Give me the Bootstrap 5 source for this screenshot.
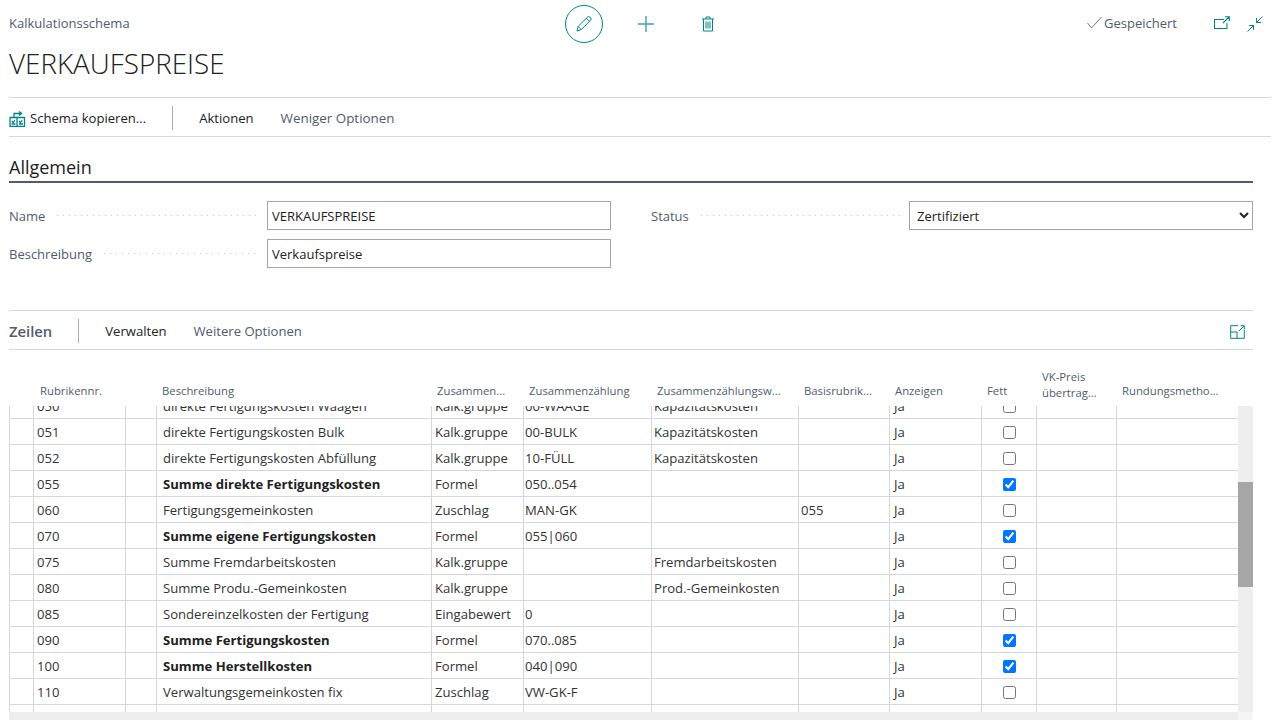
<!DOCTYPE html>
<html lang="de"><head><meta charset="utf-8"><title>Verkaufspreise</title>
<link href="https://cdn.jsdelivr.net/npm/bootstrap@5.3.0/dist/css/bootstrap.min.css" rel="stylesheet">
<style>
html,body{height:720px;overflow:hidden;background:#fff}
body{font-family:"Open Sans","Noto Sans",sans-serif;font-size:13px;color:#212121;line-height:1.3}
svg{display:block;fill:none;stroke:#008489}
.page{padding-left:9px;width:1271px}
.inner{width:1244px}
.top{display:grid;grid-template-columns:1fr auto 1fr;height:46px;align-items:center;padding-top:2px}
.muted{color:#505c6d}
.lift{margin-bottom:2px}
.mid{display:flex;align-items:center}
.pencil{width:38px;height:38px;border:1px solid #008489;border-radius:50%;display:flex;align-items:center;justify-content:center}
.plus{margin-left:34px}
.trash{margin-left:46px}
.chk{stroke:#6c7685;margin-right:2px}
.open{margin-left:37px}
.cl{margin-left:17px;margin-right:8px}
.title{font-size:27.8px;font-weight:300;color:#212121;line-height:34px;height:51px}
.bar{display:flex;align-items:center;height:40px;padding-top:3px;border-top:1px solid #d5d5dc;border-bottom:1px solid #d5d5dc;font-size:13.1px}
.sep{width:1px;height:24px;background:#a6adb8;margin-left:26px;margin-right:26px;margin-top:-2px}
.gap-m{margin-left:27px}
.wide{font-size:13.4px}
.sec{font-size:18px;font-weight:500;color:#212121;height:46px;padding-top:18px;line-height:24px;border-bottom:2px solid #505c6d}
.row.f{--bs-gutter-x:40px;margin-top:18px;height:109px}
.fld{display:flex;height:29px;margin-bottom:9px;align-items:center}
.lbl{width:258px;display:flex;align-items:center;gap:12px;color:#505c6d;padding-top:1px}
.dots{flex:1;height:2px;margin-right:8px;background-image:linear-gradient(90deg,#c4c8cf 1px,transparent 1px);background-size:6px 1px;background-repeat:repeat-x}
.form-control.bc,.form-select.bc{height:29px;border:1px solid #a6a6a6;border-radius:0;padding:1px 4px 0;font-size:13px;color:#212121;min-height:0;flex:1;width:auto;box-shadow:none}
.form-select.bc{padding-left:3px;appearance:auto;background-image:none}
.zeilen{font-size:14.8px;font-weight:600;color:#505c6d}
.grid{table-layout:fixed;width:1229px;margin:0;border-collapse:collapse}
.head{height:56px}
.head th{border:0;font-weight:400;color:#505c6d;font-size:11.3px;line-height:16px;padding:0 0 7px 6px;vertical-align:bottom;background:transparent;box-shadow:none;white-space:nowrap}
.head th:nth-child(2){padding-left:7px}
.head th:nth-child(11){padding-bottom:5px}
.body{display:flex;height:306px;width:1244px}
.clip{width:1229px;overflow:hidden;height:306px}
.clip table{margin-top:-14px}
.clip td{height:26px;padding:0 0 0 4px;border:1px solid #d5d5dc;vertical-align:middle;line-height:24px;white-space:nowrap;color:#333;font-size:13.1px;background:transparent;box-shadow:none;overflow:hidden}
.clip td:nth-child(2){padding-left:3px}
.clip td:nth-child(4){padding-left:6px}
.clip td:nth-child(5){padding-left:3px}
.clip td:nth-child(6){padding-left:1px}
.clip td:nth-child(7),.clip td:nth-child(8){padding-left:2px}
.clip td.c{padding:0;text-align:center}
.clip td.c input{display:block;margin:1px auto 0;width:13px;height:13px}
.clip tr.b td:nth-child(4){font-weight:700;color:#212121}
.vs{width:15px;background:#eee;height:306px}
.vs div{margin-top:76px;height:105px;background:#a6a6a6}
.hs{display:flex;height:8px;width:1244px}
.hs div{width:1229px;background:#eee}
.hs span{width:15px;background:#f5f5f5}
</style></head><body>
<div class="page">
 <div class="top">
  <div class="muted lift">Kalkulationsschema</div>
  <div class="mid">
   <div class="pencil"><svg width="18" height="18" viewBox="0 0 18 18"><path d="M2 16l1.200-4.600L12.600 2a1.600 1.600 0 0 1 2.200 0l.9.9a1.600 1.600 0 0 1 0 2.200L6.300 14.600zM3.200 11.400l3.100 3.200M11.400 3.200l3.200 3.200"/></svg></div>
   <div class="plus"><svg width="18" height="18" viewBox="0 0 18 18"><path d="M9 1v16M1 9h16" stroke-width="1.400" opacity=".75"/></svg></div>
   <div class="trash"><svg width="14" height="16" viewBox="0 0 14 16"><path d="M1 3h12M5 3V1h4v2M2.500 3v12h9V3M5 5.500v7M7 5.500v7M9 5.500v7"/></svg></div>
  </div>
  <div class="d-flex justify-content-end align-items-center muted">
   <svg width="15" height="13" viewBox="0 0 15 13" class="chk lift"><path d="M.5 7l4 5L14.500 1"/></svg>
   <span class="lift">Gespeichert</span>
   <svg width="16" height="13" viewBox="0 0 16 13" class="open lift"><path d="M10 3.500H.5v9H13V7M9 7l6-6M11 .7h4.300V5" stroke-width="1.100"/></svg>
   <svg width="16" height="16" viewBox="0 0 16 16" class="cl"><path d="M15.500.5L9.500 6.500M9.500 2v4.500H14M.5 15.500l6-6M2 9.500h4.500V14"/></svg>
  </div>
 </div>
 <div class="title">VERKAUFSPREISE</div>
 <div class="bar">
  <svg width="17" height="16" viewBox="0 0 17 16" class="me-1"><path d="M1 6.500h7v9H1zM8 6.500h7.500v9H8zM2.800 10l1.400 1.500 1.800-2.200M10 10l1.400 1.500 1.800-2.200M2.500 13h4M10 13h4M5 6V2.500h7M10 .5l2.500 2-2.500 2" stroke-width="1.300"/></svg>
  <span>Schema kopieren...</span><span class="sep"></span>
  <span>Aktionen</span><span class="muted gap-m wide">Weniger Optionen</span>
 </div>
 <div class="inner">
  <div class="sec">Allgemein</div>
  <div class="row f">
   <div class="col-6">
    <div class="fld"><div class="lbl"><span>Name</span><span class="dots"></span></div><input class="form-control bc" value="VERKAUFSPREISE"></div>
    <div class="fld"><div class="lbl"><span>Beschreibung</span><span class="dots"></span></div><input class="form-control bc" value="Verkaufspreise"></div>
   </div>
   <div class="col-6">
    <div class="fld"><div class="lbl"><span>Status</span><span class="dots"></span></div><select class="form-select bc"><option>Zertifiziert</option></select></div>
   </div>
  </div>
  <div class="bar">
   <span class="zeilen">Zeilen</span><span class="sep"></span>
   <span>Verwalten</span><span class="muted gap-m">Weitere Optionen</span>
   <svg class="ms-auto me-2" width="15" height="14" viewBox="0 0 15 14"><path d="M8 .7H.7v12.600h13.600V5M.7 7H7v6.300M9 6l5-5M10.500.7h3.800v3.800"/></svg>
  </div>
  <table class="table grid head"><colgroup><col style="width:24px"><col style="width:92px"><col style="width:31px"><col style="width:275px"><col style="width:92px"><col style="width:128px"><col style="width:147px"><col style="width:91px"><col style="width:92px"><col style="width:55px"><col style="width:80px"><col style="width:122px"></colgroup>
   <thead><tr><th></th><th>Rubrikennr.</th><th></th><th>Beschreibung</th><th>Zusammen...</th><th>Zusammenzählung</th><th>Zusammenzählungsw...</th><th>Basisrubrik...</th><th>Anzeigen</th><th>Fett</th><th>VK-Preis<br>übertrag...</th><th>Rundungsmetho...</th></tr></thead></table>
  <div class="body">
   <div class="clip"><table class="table grid"><colgroup><col style="width:24px"><col style="width:92px"><col style="width:31px"><col style="width:275px"><col style="width:92px"><col style="width:128px"><col style="width:147px"><col style="width:91px"><col style="width:92px"><col style="width:55px"><col style="width:80px"><col style="width:122px"></colgroup>
   <tbody>
   <tr><td></td><td>050</td><td></td><td>direkte Fertigungskosten Waagen</td><td>Kalk.gruppe</td><td>00-WAAGE</td><td>Kapazitätskosten</td><td></td><td>Ja</td><td class="c"><input type="checkbox"></td><td></td><td></td></tr>
   <tr><td></td><td>051</td><td></td><td>direkte Fertigungskosten Bulk</td><td>Kalk.gruppe</td><td>00-BULK</td><td>Kapazitätskosten</td><td></td><td>Ja</td><td class="c"><input type="checkbox"></td><td></td><td></td></tr>
   <tr><td></td><td>052</td><td></td><td>direkte Fertigungskosten Abfüllung</td><td>Kalk.gruppe</td><td>10-FÜLL</td><td>Kapazitätskosten</td><td></td><td>Ja</td><td class="c"><input type="checkbox"></td><td></td><td></td></tr>
   <tr class="b"><td></td><td>055</td><td></td><td>Summe direkte Fertigungskosten</td><td>Formel</td><td>050..054</td><td></td><td></td><td>Ja</td><td class="c"><input type="checkbox" checked></td><td></td><td></td></tr>
   <tr><td></td><td>060</td><td></td><td>Fertigungsgemeinkosten</td><td>Zuschlag</td><td>MAN-GK</td><td></td><td>055</td><td>Ja</td><td class="c"><input type="checkbox"></td><td></td><td></td></tr>
   <tr class="b"><td></td><td>070</td><td></td><td>Summe eigene Fertigungskosten</td><td>Formel</td><td>055|060</td><td></td><td></td><td>Ja</td><td class="c"><input type="checkbox" checked></td><td></td><td></td></tr>
   <tr><td></td><td>075</td><td></td><td>Summe Fremdarbeitskosten</td><td>Kalk.gruppe</td><td></td><td>Fremdarbeitskosten</td><td></td><td>Ja</td><td class="c"><input type="checkbox"></td><td></td><td></td></tr>
   <tr><td></td><td>080</td><td></td><td>Summe Produ.-Gemeinkosten</td><td>Kalk.gruppe</td><td></td><td>Prod.-Gemeinkosten</td><td></td><td>Ja</td><td class="c"><input type="checkbox"></td><td></td><td></td></tr>
   <tr><td></td><td>085</td><td></td><td>Sondereinzelkosten der Fertigung</td><td>Eingabewert</td><td>0</td><td></td><td></td><td>Ja</td><td class="c"><input type="checkbox"></td><td></td><td></td></tr>
   <tr class="b"><td></td><td>090</td><td></td><td>Summe Fertigungskosten</td><td>Formel</td><td>070..085</td><td></td><td></td><td>Ja</td><td class="c"><input type="checkbox" checked></td><td></td><td></td></tr>
   <tr class="b"><td></td><td>100</td><td></td><td>Summe Herstellkosten</td><td>Formel</td><td>040|090</td><td></td><td></td><td>Ja</td><td class="c"><input type="checkbox" checked></td><td></td><td></td></tr>
   <tr><td></td><td>110</td><td></td><td>Verwaltungsgemeinkosten fix</td><td>Zuschlag</td><td>VW-GK-F</td><td></td><td></td><td>Ja</td><td class="c"><input type="checkbox"></td><td></td><td></td></tr>
   <tr><td></td><td></td><td></td><td></td><td></td><td></td><td></td><td></td><td></td><td class="c"><input type="checkbox"></td><td></td><td></td></tr>
   </tbody></table></div>
   <div class="vs"><div></div></div>
  </div>
  <div class="hs"><div></div><span></span></div>
 </div>
</div>
</body></html>
